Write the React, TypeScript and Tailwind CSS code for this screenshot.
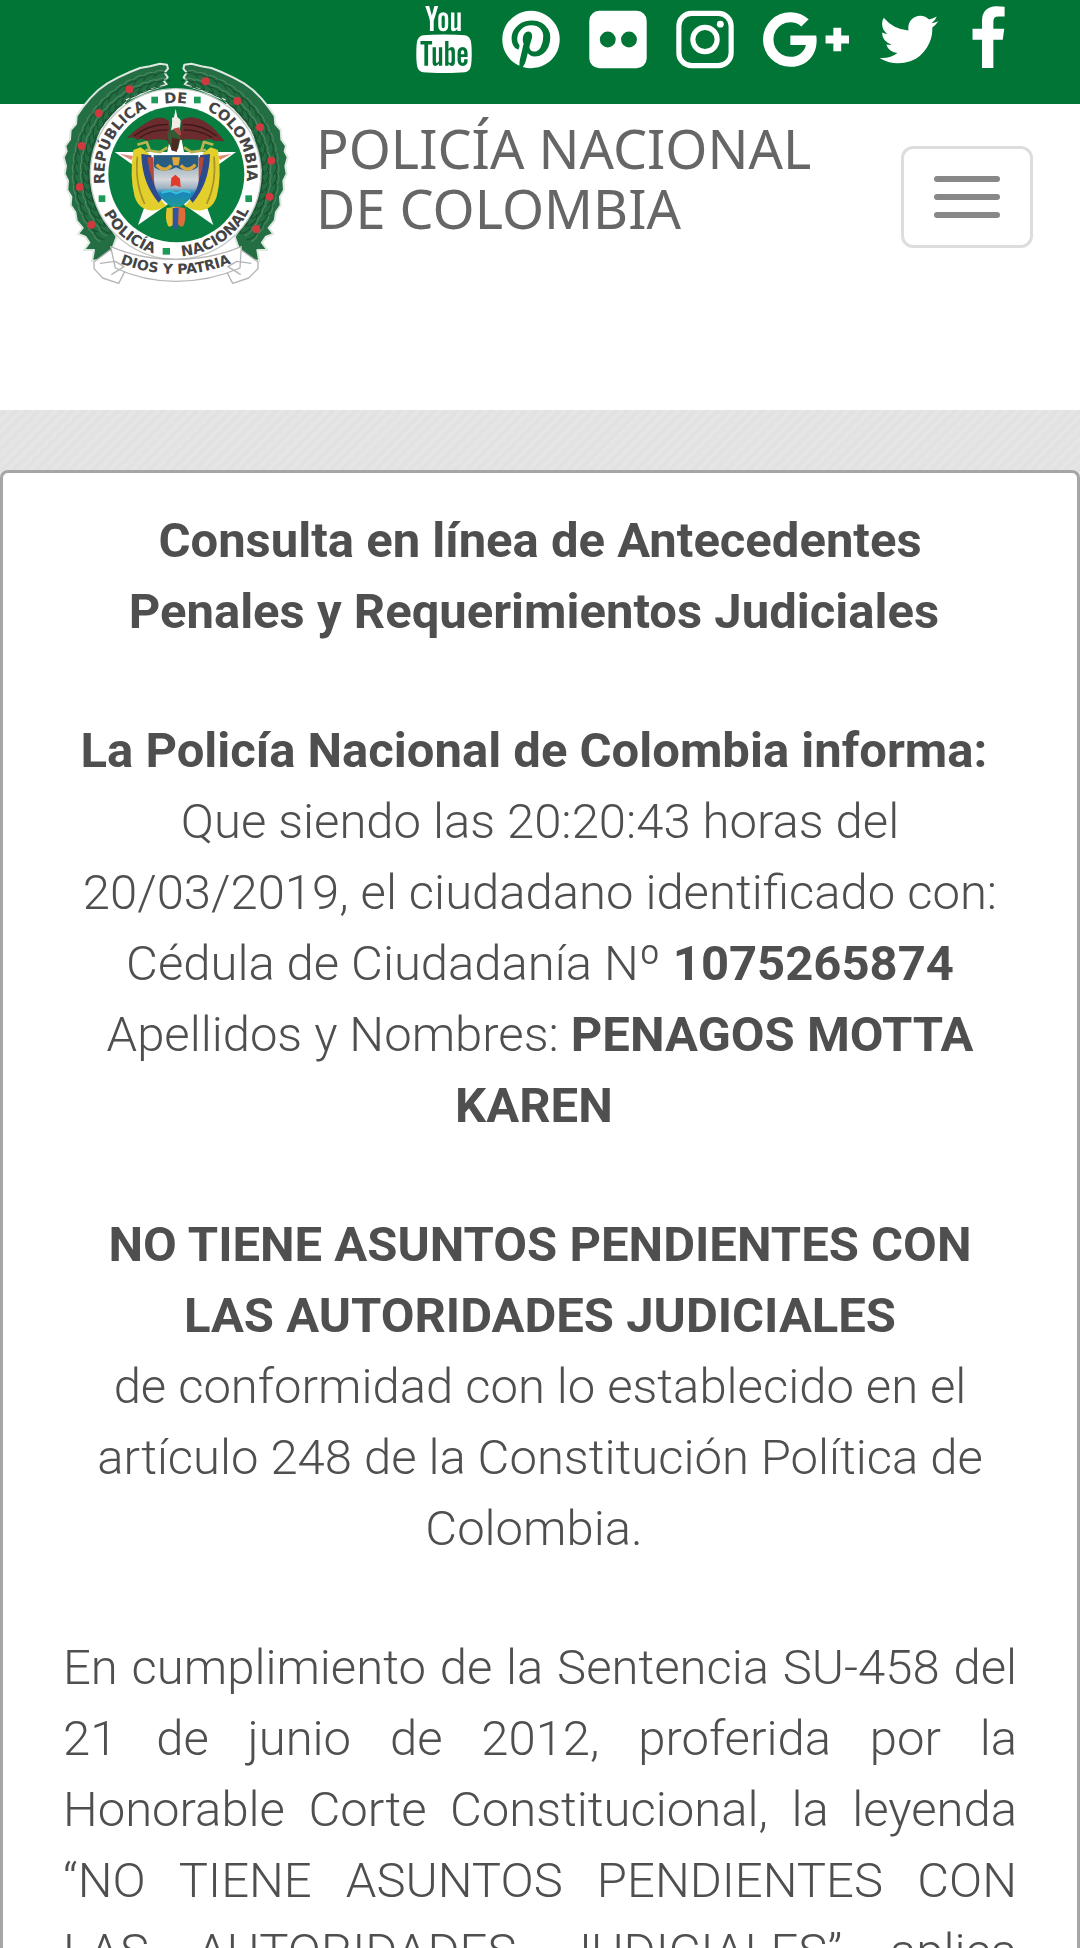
import React from "react";

const youtube =
  "M1099 1244v211q0 67-39 67-23 0-45-22v-301q22-22 45-22 39 0 39 67zm338 1v46h-90v-46q0-68 45-68t45 68zm-966-218h107v-94h-312v94h105v569h100v-569zm288 569h89v-494h-89v378q-30 42-57 42-18 0-21-21-1-3-1-35v-364h-89v391q0 49 8 73 12 37 58 37 48 0 102-61v54zm429-148v-197q0-73-9-99-17-56-71-56-50 0-93 54v-217h-89v663h89v-48q45 55 93 55 54 0 71-55 9-27 9-100zm338-10v-13h-91q0 51-2 61-7 36-40 36-46 0-46-69v-87h179v-103q0-79-27-116-39-51-106-51-68 0-107 51-28 37-28 116v173q0 79 29 116 39 51 108 51 72 0 108-53 18-27 21-54 2-9 2-58zm-608-913v-210q0-69-43-69t-43 69v210q0 70 43 70t43-70zm719 751q0 234-26 350-14 59-58 99t-102 46q-184 21-555 21t-555-21q-58-6-102.5-46t-57.5-99q-26-112-26-350 0-234 26-350 14-59 58-99t103-47q183-20 554-20t555 20q58 7 102.5 47t57.5 99q26 112 26 350zm-998-1276h102l-121 399v271h-100v-271q-14-74-61-212-37-103-65-187h106l71 263zm370 333v175q0 81-28 118-38 51-106 51-67 0-105-51-28-38-28-118v-175q0-80 28-117 38-51 105-51 68 0 106 51 28 37 28 117zm335-162v499h-91v-55q-53 62-103 62-46 0-59-37-8-24-8-75v-394h91v367q0 33 1 35 3 22 21 22 27 0 57-43v-381h91z";
const pinterest =
  "M1664 896q0 209-103 385.5t-279.5 279.5-385.5 103q-111 0-218-32 59-93 78-164 9-34 54-211 20 39 73 67.5t114 28.5q121 0 216-68.5t147-188.5 52-270q0-114-59.5-214t-172.5-163-255-63q-105 0-196 29t-154.5 77-109 110.5-67 129.5-21.5 134q0 104 40 183t117 111q30 12 38-20 2-7 8-31t8-30q6-23-11-43-51-61-51-151 0-151 104.5-259.5t273.5-108.5q151 0 235.5 82t84.5 213q0 170-68.5 289t-175.5 119q-61 0-98-43.5t-23-104.5q8-35 26.5-93.5t30-103 11.5-75.5q0-50-27-83t-77-33q-62 0-105 57t-43 142q0 73 25 122l-99 418q-17 70-13 177-206-91-333-281t-127-423q0-209 103-385.5t279.5-279.5 385.5-103 385.5 103 279.5 279.5 103 385.5z";
const googlePlus =
  "M1437 913q0 208-87 370.5t-248 254-369 91.5q-149 0-285-58t-234-156-156-234-58-285 58-285 156-234 234-156 285-58q286 0 491 192l-199 191q-117-113-292-113-123 0-227.5 62t-165.5 168.5-61 232.5 61 232.5 165.5 168.5 227.5 62q83 0 152.5-23t114.5-57.5 78.5-78.5 49-83 21.5-74h-416v-252h692q12 63 12 122zm867-122v210h-209v209h-210v-209h-209v-210h209v-209h210v209h209z";
const twitter =
  "M1684 408q-67 98-162 167 1 14 1 42 0 130-38 259.5t-115.5 248.5-184.5 210.5-258 146-323 54.5q-271 0-496-145 35 4 78 4 225 0 401-138-105-2-188-64.5t-114-159.5q33 5 61 5 43 0 85-11-112-23-185.5-111.5t-73.5-205.5v-4q68 38 146 41-66-44-105-115t-39-154q0-88 44-163 121 149 294.5 238.5t371.5 99.5q-8-38-8-74 0-134 94.5-228.5t228.5-94.5q140 0 236 102 109-21 205-78-37 115-142 178 93-10 186-50z";
const facebook =
  "M1343 12v264h-157q-86 0-116 36t-30 108v189h293l-39 296h-254v759h-306v-759h-255v-296h255v-218q0-186 104-288.5t277-102.5q147 0 228 12z";

function SocialLinks() {
  return (
    <nav aria-label="Redes sociales" className="flex justify-end gap-[29px] pr-[73px] pt-1.5 text-white">
      <a href="#youtube" aria-label="YouTube">
        <svg viewBox="128 0 1536 1792" className="h-[67px] w-[58px]" fill="currentColor"><path d={youtube} /></svg>
      </a>
      <a href="#pinterest" aria-label="Pinterest">
        <svg viewBox="128 0 1536 1792" className="h-[67px] w-[58px]" fill="currentColor"><path d={pinterest} /></svg>
      </a>
      <a href="#flickr" aria-label="Flickr">
        <svg viewBox="128 0 1536 1792" className="h-[67px] w-[58px]" fill="currentColor">
          <path fillRule="evenodd" d="M392 128h1008a264 264 0 0 1 264 264v1008a264 264 0 0 1-264 264h-1008a264 264 0 0 1-264-264v-1008a264 264 0 0 1 264-264zM622 684a212 212 0 1 0 0 424a212 212 0 1 0 0-424zM1190 684a212 212 0 1 0 0 424a212 212 0 1 0 0-424z" />
        </svg>
      </a>
      <a href="#instagram" aria-label="Instagram">
        <svg viewBox="128 0 1536 1792" className="h-[67px] w-[58px]" fill="none" stroke="currentColor">
          <rect x="197" y="197" width="1398" height="1398" rx="340" strokeWidth="138" />
          <circle cx="896" cy="896" r="325" strokeWidth="138" />
          <circle cx="1306" cy="486" r="92" fill="currentColor" stroke="none" />
        </svg>
      </a>
      <a href="#google-plus" aria-label="Google Plus">
        <svg viewBox="0 0 2304 1792" className="h-[67px] w-[86px]" fill="currentColor"><path d={googlePlus} /></svg>
      </a>
      <a href="#twitter" aria-label="Twitter">
        <svg viewBox="64 0 1664 1792" className="h-[67px] w-[62px]" fill="currentColor"><path d={twitter} /></svg>
      </a>
      <a href="#facebook" aria-label="Facebook">
        <svg viewBox="384 0 1024 1792" className="h-[67px] w-[38px]" fill="currentColor"><path d={facebook} /></svg>
      </a>
    </nav>
  );
}

const leafAngles = Array.from({ length: 21 }, (_, i) => 9 + i * 6);
const berries = [
  [238, 118], [146, 190], [95, 288], [89, 411], [124, 524],
  [467, 94], [562, 153], [630, 232], [664, 332], [659, 440], [619, 537],
];

function WreathSide({ mirrored }: { mirrored?: boolean }) {
  return (
    <g transform={mirrored ? "translate(754 0) scale(-1 1)" : undefined}>
      <path
        d="M351 44L330 41L300 49L270 54L240 66L205 82L172 100L145 120L120 145L98 172L80 198L78 222L62 240L60 268L46 288L50 304L41 322L48 348L44 372L54 392L52 420L64 440L62 466L76 486L80 512L98 534L84 552L106 560L118 578L102 600L132 600L126 634L178 622L200 560L150 480L122 360L150 240L230 150L300 120L351 104L342 94L353 82L344 68L354 56Z"
        fill="#246e44" stroke="#dfe7e1" strokeWidth="6" strokeLinejoin="round"
      />
      {leafAngles.map((a) => (
        <g key={a} transform={`rotate(${-a} 377 368)`} fill="none" strokeWidth="3">
          <path d="M358 102q24-22 46-8M354 76q20-18 42-8M356 104q20 8 42 0" stroke="#174f2e" />
          <path d="M360 88q16-10 34-4M358 62q16-8 30-2" stroke="#4f8a63" />
        </g>
      ))}
    </g>
  );
}

function Emblem() {
  return (
    <svg viewBox="30 30 690 681" className="h-[227px] w-[230px] shrink-0" role="img" aria-label="Escudo de la Policía Nacional de Colombia">
      <defs>
        <path id="arc-top" d="M165 402A214 214 0 1 1 589 402" />
        <path id="arc-bottom" d="M141 440A245 245 0 0 0 613 440" />
        <path id="arc-motto" d="M200 636Q377 708 554 636" />
        <linearGradient id="shield" x1="0" y1="0" x2="0" y2="1">
          <stop offset="0" stopColor="#7a98ab" />
          <stop offset="0.45" stopColor="#d4d6da" />
          <stop offset="0.6" stopColor="#9fb4c4" />
          <stop offset="0.7" stopColor="#1a86bd" />
          <stop offset="1" stopColor="#1f9f8a" />
        </linearGradient>
      </defs>
      <WreathSide />
      <WreathSide mirrored />
      {berries.map(([x, y]) => (
        <circle key={`${x}-${y}`} cx={x} cy={y} r="12" fill="#cf3a41" />
      ))}
      <circle cx="377" cy="372" r="256" fill="#fff" stroke="#c4cac6" strokeWidth="4" />
      <circle cx="379" cy="373" r="204" fill="#087f40" />

      <path d="M377 176L402 306H558L442 390L490 525L377 446L264 525L312 390L194 306H352Z" fill="#fff" />
      <path d="M210 312L250 318L244 330ZM544 312L504 318L510 330Z" fill="#dc8b78" />

      <path d="M250 300Q238 380 254 440Q270 488 322 480L350 468Q300 420 296 310L272 292Z" fill="#e3cf2c" />
      <path d="M504 300Q516 380 500 440Q484 488 432 480L404 468Q454 420 458 310L482 292Z" fill="#e3cf2c" />
      <path d="M262 320Q254 400 284 462M492 320Q500 400 470 462" fill="none" stroke="#a8932a" strokeWidth="5" />
      <path d="M274 312Q276 400 326 458L340 440Q306 390 304 316Z" fill="#2d4a8e" />
      <path d="M480 312Q478 400 428 458L414 440Q448 390 450 316Z" fill="#2d4a8e" />
      <path d="M292 322Q300 400 340 448L348 430Q316 390 310 322Z" fill="#b4473b" />
      <path d="M462 322Q454 400 414 448L406 430Q438 390 444 322Z" fill="#b4473b" />
      <path d="M310 316H446V392Q440 444 378 478Q316 444 312 392Z" fill="url(#shield)" />
      <path d="M312 316H444V350Q420 372 378 352Q336 372 312 350Z" fill="#285d82" />
      <path d="M320 344Q342 370 364 346M392 346Q414 370 436 344" fill="none" stroke="#d9a83c" strokeWidth="10" />
      <path d="M366 322H390L386 346H370Z" fill="#e1a938" />
      <path d="M364 384L376 374L390 386L392 412L376 406L362 410Z" fill="#e33a2c" />
      <path d="M334 428L360 422L378 430L400 422L422 428" fill="none" stroke="#37bfd6" strokeWidth="6" />
      <path d="M350 474Q344 508 354 528Q366 534 372 516L376 470Z" fill="#e4c42c" />
      <path d="M404 474Q410 508 400 528Q388 534 382 516L378 470Z" fill="#dd6e3a" />
      <path d="M368 474H386L384 532L376 540L368 530Z" fill="#33559c" />

      <path d="M262 284L290 276L300 302M286 300L330 306L352 292M490 284L462 276L454 302M468 300L424 306L402 292" fill="none" stroke="#b8b552" strokeWidth="8" />
      <path d="M356 212Q330 194 304 210Q270 226 228 266Q252 258 262 270Q278 262 290 272Q312 264 350 270L368 300L390 270Q434 264 458 272Q480 264 492 272L524 274Q484 220 450 208Q420 194 396 210L390 250H362Z" fill="#6c2b2c" />
      <path d="M252 258Q304 220 354 224M270 262Q310 238 352 240M500 258Q448 220 400 224M486 262Q440 238 402 240" fill="none" stroke="#3c191c" strokeWidth="4" />
      <path d="M366 204Q384 196 392 212L388 250H360Q368 230 366 204Z" fill="#f1ece8" />
      <path d="M370 236L388 232L394 254L374 262Z" fill="#b34a45" />
      <path d="M352 246L370 238L392 262L384 298L366 302L356 274Z" fill="#355b36" />
      <path d="M366 262L388 268L380 306L364 300Z" fill="#4c2a22" />

      <g fontFamily="'DejaVu Sans', sans-serif" fontWeight="700" fontSize="44" fill="#444">
        <text textAnchor="middle"><textPath href="#arc-top" startOffset="19%">REPÚBLICA</textPath></text>
        <text textAnchor="middle"><textPath href="#arc-top" startOffset="50%">DE</textPath></text>
        <text textAnchor="middle"><textPath href="#arc-top" startOffset="81%">COLOMBIA</textPath></text>
        <text textAnchor="middle"><textPath href="#arc-bottom" startOffset="24%">POLICÍA</textPath></text>
        <text textAnchor="middle"><textPath href="#arc-bottom" startOffset="73%">NACIONAL</textPath></text>
      </g>
      <g fill="#1c9a57">
        <rect x="304" y="140" width="20" height="20" />
        <rect x="432" y="140" width="20" height="20" />
        <rect x="146" y="436" width="20" height="20" />
        <rect x="586" y="436" width="20" height="20" />
        <rect x="338" y="594" width="22" height="20" />
      </g>

      <g fill="#fff" stroke="#b5b5b5" strokeWidth="4" strokeLinejoin="round">
        <path d="M132 636L180 600L232 650L206 700L158 684L132 656Z" />
        <path d="M624 636L574 600L522 650L548 700L596 684L624 656Z" />
        <path d="M182 590Q270 628 377 628Q484 628 574 590L570 654Q480 694 377 694Q280 694 196 654Z" />
        <path d="M150 640L196 634L222 650L184 674M604 640L560 634L534 650L572 674" fill="none" />
      </g>
      <text textAnchor="middle" fontFamily="'DejaVu Sans', sans-serif" fontWeight="700" fontSize="42" fill="#444">
        <textPath href="#arc-motto" startOffset="50%">DIOS Y PATRIA</textPath>
      </text>
    </svg>
  );
}

export default function App() {
  return (
    <div className="flex h-screen flex-col overflow-hidden bg-white font-['Roboto',sans-serif] text-[#4f4f4f]">
      <div className="h-[104px] shrink-0 bg-[#007536]">
        <SocialLinks />
      </div>
      <header className="flex h-[306px] shrink-0 items-start justify-between pl-[60px] pr-[47px]">
        <a href="#inicio" className="relative flex items-start">
          <span className="-mt-11 flex"><Emblem /></span>
          <span className="ml-[26px] mt-3.5 whitespace-nowrap font-['Noto_Sans',sans-serif] text-[54px] leading-[60px] text-[#666]">
            POLICÍA NACIONAL
            <br />
            DE COLOMBIA
          </span>
        </a>
        <button
          type="button"
          aria-label="Abrir menú"
          className="mt-[42px] flex flex-col gap-3 rounded-xl border-3 border-[#ddd] px-[30px] py-[27px]"
        >
          <span className="h-1.5 w-[66px] rounded-[3px] bg-[#888]" />
          <span className="h-1.5 w-[66px] rounded-[3px] bg-[#888]" />
          <span className="h-1.5 w-[66px] rounded-[3px] bg-[#888]" />
        </button>
      </header>
      <main className="grow bg-[repeating-linear-gradient(135deg,#e6e6e6_0px,#e1e1e1_4px,#e6e6e6_8px)] pt-[60px]">
        <article className="flex flex-col gap-[68px] rounded-lg border-3 border-[#a6a6a6] bg-white px-[60px] py-8 text-center text-[49px] font-light leading-[71px]">
          <h1 className="font-bold">
            Consulta en línea de Antecedentes
            <br />
            Penales y Requerimientos Judiciales&nbsp;
          </h1>
          <p>
            <b className="font-bold">La Policía Nacional de Colombia informa:&nbsp;</b>
            <br />
            Que siendo las 20:20:43 horas del 20/03/2019, el ciudadano identificado con:
            <br />
            Cédula de Ciudadanía Nº <b className="font-bold">1075265874</b>
            <br />
            Apellidos y Nombres: <b className="font-bold">PENAGOS MOTTA KAREN&nbsp;</b>
          </p>
          <p>
            <b className="font-bold">NO TIENE ASUNTOS PENDIENTES CON LAS AUTORIDADES JUDICIALES</b>
            <br />
            de conformidad con lo establecido en el artículo 248 de la Constitución Política de Colombia.&nbsp;
          </p>
          <p className="text-justify [text-align-last:justify]">
            En cumplimiento de la Sentencia SU-458 del 21 de junio de 2012, proferida por la Honorable Corte
            Constitucional, la leyenda “NO TIENE ASUNTOS PENDIENTES CON LAS AUTORIDADES JUDICIALES” aplica
          </p>
        </article>
      </main>
    </div>
  );
}
